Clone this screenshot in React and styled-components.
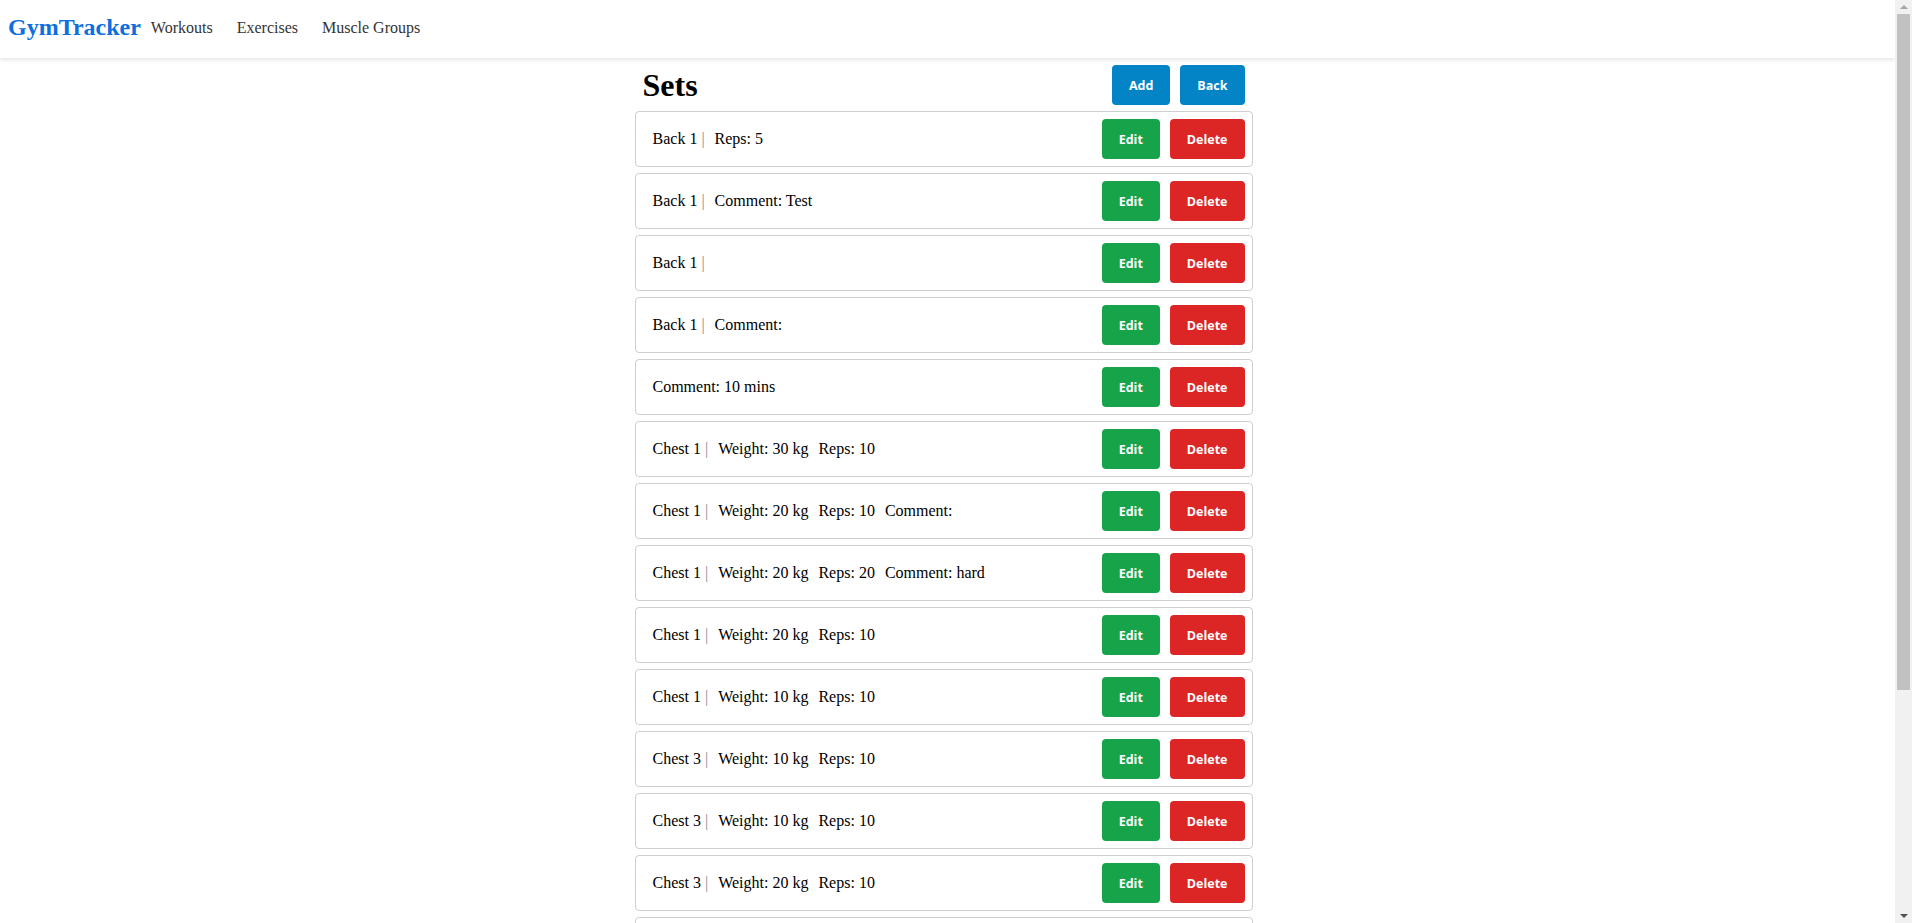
import React from "react";
import styled, { createGlobalStyle } from "styled-components";

const GlobalStyle = createGlobalStyle`
  body {
    margin: 0;
    font-family: "Liberation Serif", "Times New Roman", serif;
    background: #fff;
    color: #000;
  }
`;

const Page = styled.div`
  padding-right: 17px;
`;

const ScrollTrack = styled.div`
  position: fixed;
  top: 0;
  right: 0;
  width: 17px;
  height: 100vh;
  background: #f1f1f1;
  display: flex;
  flex-direction: column;
  align-items: center;
  z-index: 10;
`;

const ScrollArrow = styled.div`
  height: 14px;
  width: 17px;
  display: flex;
  align-items: center;
  justify-content: center;
`;

const ScrollThumb = styled.div`
  width: 13px;
  height: 676px;
  background: #c1c1c1;
`;

const NavBar = styled.nav`
  display: flex;
  align-items: center;
  height: 58px;
  padding: 0 8px;
  background: #fff;
  box-shadow: 0 2px 4px rgba(0, 0, 0, 0.1);
`;

const Brand = styled.a`
  font-size: 24px;
  font-weight: 700;
  color: #0d6edf;
  text-decoration: none;
  margin-right: -2px;
  padding-bottom: 4px;
`;

const NavLink = styled.a`
  font-size: 16px;
  color: #333;
  text-decoration: none;
  padding: 0 12px 2px;
`;

const Main = styled.main`
  box-sizing: border-box;
  width: 626px;
  margin: 0 auto;
  padding: 7px 8px 0 0;
`;

const Header = styled.div`
  display: flex;
  align-items: center;
  justify-content: space-between;
  padding: 0 8px;
  margin-bottom: 6px;

  h1 {
    margin: 0;
    font-size: 32px;
    font-weight: 700;
  }
`;

const ButtonGroup = styled.div`
  display: flex;
  gap: 10px;
`;

const colors = {
  blue: "#0284c7",
  green: "#16a34a",
  red: "#dc2626",
};

const Button = styled.button`
  height: 40px;
  padding: 0 17px;
  border: none;
  border-radius: 4px;
  background: ${(p) => colors[p.$tone]};
  color: #fff;
  font-family: "Open Sans", Lato, sans-serif;
  font-size: 12.5px;
  font-weight: 700;
  cursor: pointer;
`;

const Card = styled.div`
  display: flex;
  align-items: center;
  justify-content: space-between;
  border: 1px solid #cfcfcf;
  border-radius: 4px;
  padding: 7px 7px 7px 17px;
  margin-bottom: 6px;
  font-size: 16px;
`;

const Info = styled.div`
  white-space: nowrap;
`;

const Pipe = styled.span`
  color: #8a8a8a;
`;

const Field = styled.span`
  margin-left: 10px;
`;

const sets = [
  { name: "Back 1", reps: 5 },
  { name: "Back 1", comment: "Test" },
  { name: "Back 1" },
  { name: "Back 1", comment: "" },
  { comment: "10 mins" },
  { name: "Chest 1", weight: 30, reps: 10 },
  { name: "Chest 1", weight: 20, reps: 10, comment: "" },
  { name: "Chest 1", weight: 20, reps: 20, comment: "hard" },
  { name: "Chest 1", weight: 20, reps: 10 },
  { name: "Chest 1", weight: 10, reps: 10 },
  { name: "Chest 3", weight: 10, reps: 10 },
  { name: "Chest 3", weight: 10, reps: 10 },
  { name: "Chest 3", weight: 20, reps: 10 },
  { name: "Chest 3", weight: 20, reps: 8 },
  { name: "Legs 1", weight: 40, reps: 10 },
  { name: "Legs 1", weight: 40, reps: 8 },
  { name: "Legs 1", weight: 50, reps: 6, comment: "heavy" },
  { name: "Shoulders 1", weight: 10, reps: 12 },
];

export default function App() {
  return (
    <Page>
      <GlobalStyle />
      <ScrollTrack>
        <ScrollArrow>
          <svg width="8" height="4" viewBox="0 0 8 4">
            <path d="M0 4 L4 0 L8 4 Z" fill="#a3a3a3" />
          </svg>
        </ScrollArrow>
        <ScrollThumb />
        <div style={{ flex: 1 }} />
        <ScrollArrow>
          <svg width="8" height="4" viewBox="0 0 8 4">
            <path d="M0 0 L8 0 L4 4 Z" fill="#505050" />
          </svg>
        </ScrollArrow>
      </ScrollTrack>
      <NavBar>
        <Brand href="#">GymTracker</Brand>
        <NavLink href="#">Workouts</NavLink>
        <NavLink href="#">Exercises</NavLink>
        <NavLink href="#">Muscle Groups</NavLink>
      </NavBar>
      <Main>
        <Header>
          <h1>Sets</h1>
          <ButtonGroup>
            <Button $tone="blue">Add</Button>
            <Button $tone="blue">Back</Button>
          </ButtonGroup>
        </Header>
        {sets.map((item, i) => (
          <Card key={i}>
            <Info>
              {item.name && (
                <>
                  {item.name} <Pipe>|</Pipe>
                </>
              )}
              {item.weight !== undefined && <Field>Weight: {item.weight} kg</Field>}
              {item.reps !== undefined && <Field>Reps: {item.reps}</Field>}
              {item.comment !== undefined &&
                (item.name ? (
                  <Field>Comment: {item.comment}</Field>
                ) : (
                  <span>Comment: {item.comment}</span>
                ))}
            </Info>
            <ButtonGroup>
              <Button $tone="green">Edit</Button>
              <Button $tone="red">Delete</Button>
            </ButtonGroup>
          </Card>
        ))}
      </Main>
    </Page>
  );
}
